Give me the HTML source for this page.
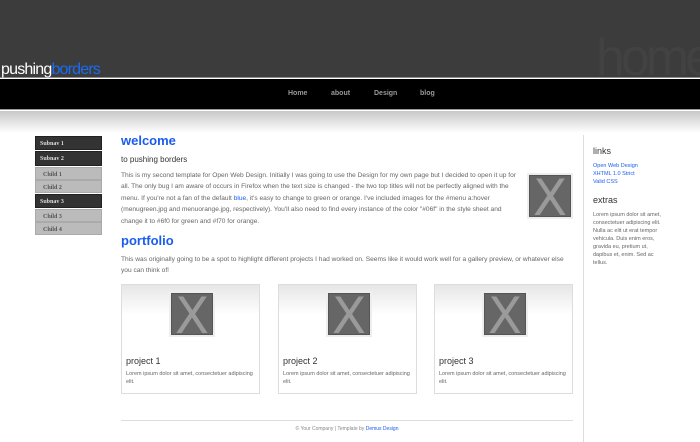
<!DOCTYPE html>
<html><head><style>
*{margin:0;padding:0;box-sizing:border-box}
body{width:700px;height:442px;overflow:hidden;background:#fff;font-family:"Liberation Sans",sans-serif;position:relative}
.hdr{position:absolute;left:0;top:0;width:700px;height:78px;background:#3c3c3c;border-bottom:1px solid #8a8a8a}
.home{position:absolute;right:-10px;top:28px;font-size:52px;color:#424242;letter-spacing:-4px}
.logo{position:absolute;left:1px;top:61px;font-size:16px;color:#fff;letter-spacing:-0.8px}
.logo span{color:#1a6cf0}
.nav{position:absolute;left:0;top:79px;width:700px;height:31px;background:#000;border-bottom:1px solid #999}
.nav a{position:absolute;top:11px;font-size:7px;color:#999;font-weight:bold}
.grad{position:absolute;left:0;top:111px;width:700px;height:22px;background:linear-gradient(#c8c8c8,#fff)}
.side{position:absolute;left:35px;width:67px;font-size:6px;font-weight:bold;font-family:"Liberation Serif",serif;padding-left:4px;padding-top:4px}
.d{background:#333;color:#ddd;border:1px solid #222}
.l{background:#bbb;color:#555;border:1px solid #aaa;padding-left:7px}
.blue{color:#1a5cf0}
h2{position:absolute;font-size:13px;color:#1a5cf0;font-weight:bold}
p{position:absolute;font-size:6.6px;color:#666;line-height:11.4px}
.ph{position:absolute;width:42px;height:42px;background:#666;border:1px solid #555;box-shadow:0 0 0 2px #eee;color:#9a9a9a;font-size:50px;text-align:center;line-height:44px;overflow:hidden;font-family:"DejaVu Sans",sans-serif}
.card{position:absolute;top:284px;width:139px;height:110px;border:1px solid #ddd;background:linear-gradient(#e6e6e6,#fff 30px)}
.card h3{position:absolute;left:4px;top:71px;font-size:9px;font-weight:normal;color:#333}
.card p{left:4px;top:85px;width:128px;font-size:5.5px;line-height:8px}
</style></head><body>
<div class="hdr"><div class="home">home</div><div class="logo">pushing<span>borders</span></div></div>
<div class="nav"><a style="left:288px">Home</a><a style="left:331px">about</a><a style="left:374px">Design</a><a style="left:420px">blog</a></div>
<div class="grad"></div>
<div class="side d" style="top:136px;height:14px">Subnav 1</div>
<div class="side d" style="top:151px;height:15px">Subnav 2</div>
<div class="side l" style="top:167px;height:13px">Child 1</div>
<div class="side l" style="top:180px;height:13px">Child 2</div>
<div class="side d" style="top:194px;height:14px">Subnav 3</div>
<div class="side l" style="top:209px;height:13px">Child 3</div>
<div class="side l" style="top:222px;height:13px">Child 4</div>
<h2 style="left:121px;top:133px">welcome</h2>
<div style="position:absolute;left:121px;top:155px;font-size:8px;color:#333">to pushing borders</div>
<p style="left:121px;top:170px;width:400px">This is my second template for Open Web Design. Initially I was going to use the Design for my own page but I decided to open it up for all. The only bug I am aware of occurs in Firefox when the text size is changed - the two top titles will not be perfectly aligned with the menu. If you're not a fan of the default <span class="blue">blue</span>, it's easy to change to green or orange. I've included images for the #menu a:hover (menugreen.jpg and menuorange.jpg, respectively). You'll also need to find every instance of the color "#06f" in the style sheet and change it to #6f0 for green and #f70 for orange.</p>
<div class="ph" style="left:529px;top:175px">X</div>
<h2 style="left:121px;top:233px">portfolio</h2>
<p style="left:121px;top:254px;width:450px">This was originally going to be a spot to highlight different projects I had worked on. Seems like it would work well for a gallery preview, or whatever else you can think of!</p>
<div class="card" style="left:121px"><div class="ph" style="left:49px;top:8px">X</div><h3>project 1</h3><p>Lorem ipsum dolor sit amet, consectetuer adipiscing elit.</p></div>
<div class="card" style="left:278px"><div class="ph" style="left:49px;top:8px">X</div><h3>project 2</h3><p>Lorem ipsum dolor sit amet, consectetuer adipiscing elit.</p></div>
<div class="card" style="left:434px"><div class="ph" style="left:49px;top:8px">X</div><h3>project 3</h3><p>Lorem ipsum dolor sit amet, consectetuer adipiscing elit.</p></div>
<div style="position:absolute;left:121px;top:420px;width:452px;height:1px;background:#ddd"></div>
<div style="position:absolute;left:121px;top:426px;width:452px;text-align:center;font-size:5px;color:#888">© Your Company | Template by <span class="blue">Demus Design</span></div>
<div style="position:absolute;left:583px;top:135px;width:1px;height:307px;background:#ddd"></div>
<div style="position:absolute;left:593px;top:146px;font-size:9px;color:#333">links</div>
<p style="left:593px;top:162px;font-size:5.5px;line-height:8px;color:#1a5cf0">Open Web Design<br>XHTML 1.0 Strict<br>Valid CSS</p>
<div style="position:absolute;left:593px;top:195px;font-size:9px;color:#333">extras</div>
<p style="left:593px;top:211px;width:75px;font-size:5.5px;line-height:8px">Lorem ipsum dolor sit amet, consectetuer adipiscing elit. Nulla ac elit ut erat tempor vehicula. Duis enim eros, gravida eu, pretium ut, dapibus et, enim. Sed ac tellus.</p>
</body></html>
